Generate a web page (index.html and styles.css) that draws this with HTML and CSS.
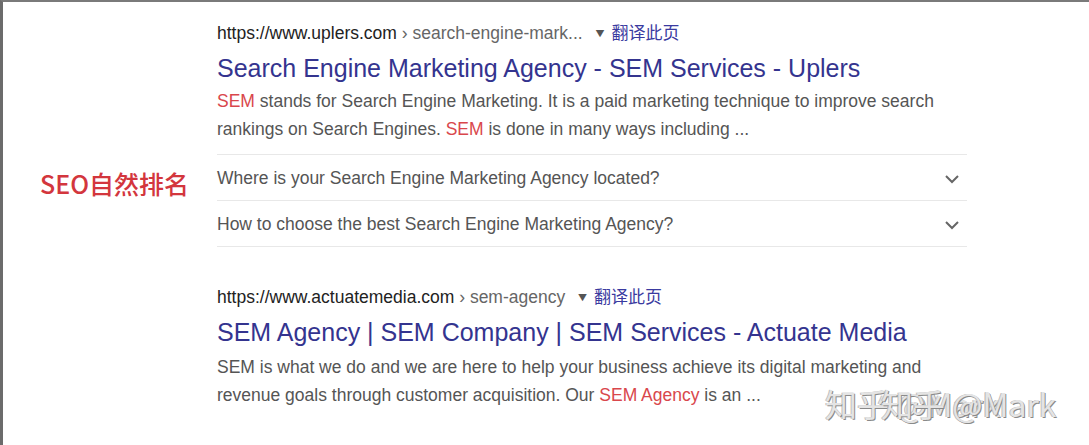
FILE: index.html
```html
<!DOCTYPE html>
<html lang="zh-CN">
<head>
    <meta charset="UTF-8">
    <meta name="viewport" content="width=device-width, initial-scale=1.0">
    <title>SEO自然排名</title>
    <link rel="stylesheet" href="styles.css">
</head>
<body>
    <div class="page">
        <div class="label-col">
            <div class="label">SEO自然排名</div>
        </div>
        <div class="results">
            <div class="result">
                <div class="url">
                    https://www.uplers.com<span class="crumb"> › search-engine-mark...</span>
                    <span class="translate"><span class="caret">▼</span>翻译此页</span>
                </div>
                <div class="title">Search Engine Marketing Agency - SEM Services - Uplers</div>
                <div class="snippet">
                    <span class="hl">SEM</span> stands for Search Engine Marketing. It is a paid marketing technique to improve search
                    rankings on Search Engines. <span class="hl">SEM</span> is done in many ways including ...
                </div>
                <div class="faq">
                    <div class="faq-row">
                        <span>Where is your Search Engine Marketing Agency located?</span>
                        <svg class="chev" width="16" height="10" viewBox="0 0 16 10"><polyline points="2,2 8,8 14,2" fill="none" stroke="#666" stroke-width="2"/></svg>
                    </div>
                    <div class="faq-row">
                        <span>How to choose the best Search Engine Marketing Agency?</span>
                        <svg class="chev" width="16" height="10" viewBox="0 0 16 10"><polyline points="2,2 8,8 14,2" fill="none" stroke="#666" stroke-width="2"/></svg>
                    </div>
                </div>
            </div>
            <div class="result second">
                <div class="url">
                    https://www.actuatemedia.com<span class="crumb"> › sem-agency</span>
                    <span class="translate"><span class="caret">▼</span>翻译此页</span>
                </div>
                <div class="title">SEM Agency | SEM Company | SEM Services - Actuate Media</div>
                <div class="snippet">
                    SEM is what we do and we are here to help your business achieve its digital marketing and
                    revenue goals through customer acquisition. Our <span class="hl">SEM Agency</span> is an ...
                </div>
            </div>
        </div>
    </div>
    <div class="watermark">
        <span class="wm-a">知乎 @Mark</span>
        <span class="wm-b">知乎 @Mark</span>
    </div>
</body>
</html>
```

FILE: styles.css
```css
html, body {
    margin: 0;
    height: 100%;
}
body {
    font-family: "Liberation Sans", Arial, "Noto Sans CJK SC", sans-serif;
    background-color: #ffffff;
    border-left: 3px solid #6b6b6b;
    border-top: 2px solid #7a7a7a;
    box-sizing: border-box;
    overflow: hidden;
    position: relative;
}
.page {
    display: flex;
}
.label-col {
    width: 214px;
    flex-shrink: 0;
}
.label {
    margin: 164px 0 0 37px;
    font-family: "Noto Sans CJK SC", sans-serif;
    font-size: 25px;
    font-weight: 500;
    color: #d3363d;
    line-height: 34px;
    white-space: nowrap;
}
.results {
    width: 750px;
}
.result {
    padding-top: 19px;
}
.result.second {
    padding-top: 38px;
}
.url {
    font-size: 17.5px;
    line-height: 22px;
    color: #222;
    white-space: nowrap;
}
.crumb {
    color: #666;
}
.translate {
    color: #3a3aa0;
    font-family: "Noto Sans CJK SC", sans-serif;
    font-size: 17px;
    margin-left: 8px;
}
.caret {
    font-size: 9px;
    color: #555;
    margin-right: 7px;
    vertical-align: 2px;
}
.title {
    margin-top: 6px;
    font-size: 25px;
    line-height: 34px;
    color: #34348f;
    white-space: nowrap;
}
.snippet {
    margin-top: 2px;
    font-size: 17.5px;
    line-height: 28px;
    color: #555;
}
.second .snippet {
    margin-top: 4px;
}
.hl {
    color: #d9474c;
}
.faq {
    margin-top: 11px;
    border-top: 1px solid #e8e8e8;
}
.faq-row {
    display: flex;
    justify-content: space-between;
    align-items: center;
    height: 45px;
    padding-top: 2px;
    box-sizing: border-box;
    border-bottom: 1px solid #e8e8e8;
    font-size: 17.5px;
    color: #555;
    padding-right: 7px;
}
.faq-row {
    height: 46px;
}
.chev {
    display: block;
}
.watermark {
    position: absolute;
    left: 822px;
    top: 378px;
    font-family: "Noto Sans CJK SC", sans-serif;
    font-size: 32px;
    color: #e4e4e4;
    text-shadow: 1px 1px 0 #8a8a8a, -1px 0 0 #bdbdbd;
    white-space: nowrap;
}
.wm-a, .wm-b {
    position: absolute;
    top: 0;
}
.wm-a {
    left: 0;
}
.wm-b {
    left: 56px;
}
```
